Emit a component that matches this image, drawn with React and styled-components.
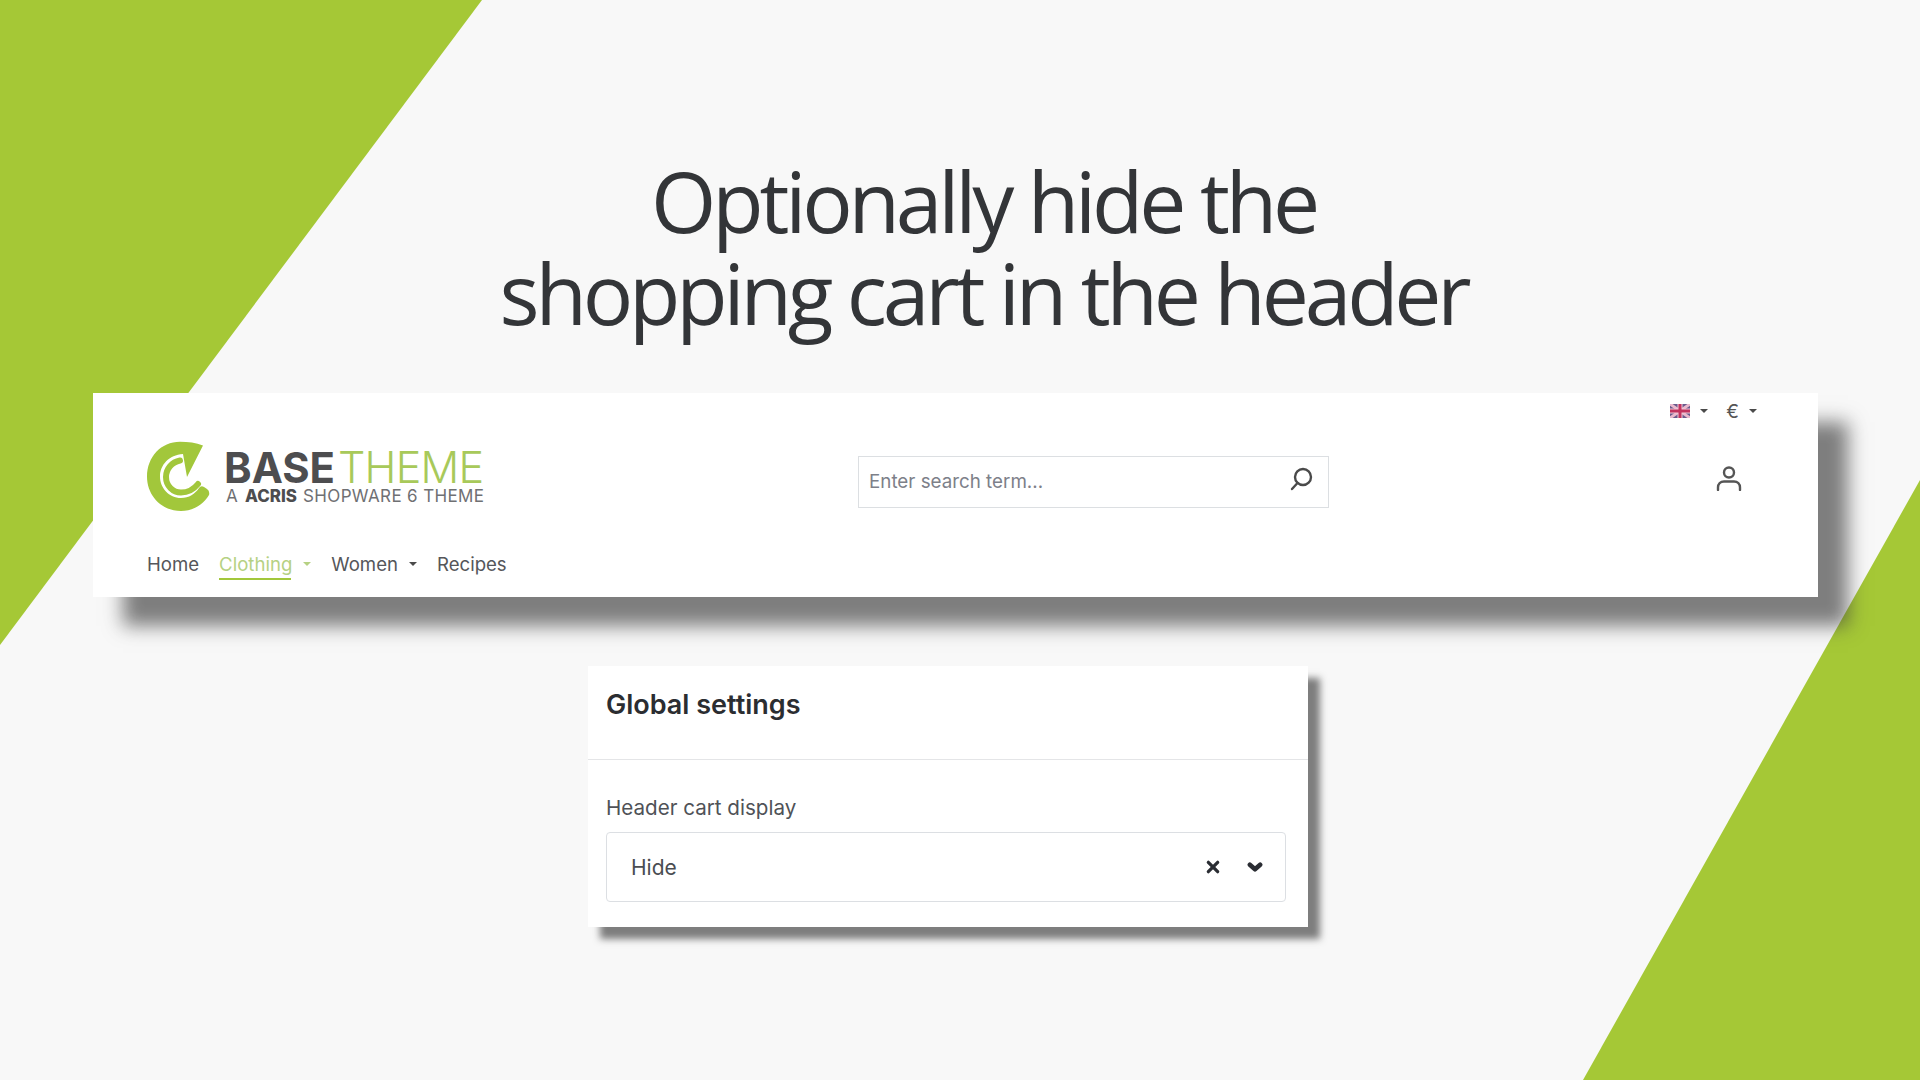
import React from 'react'
import styled, { createGlobalStyle } from 'styled-components'

const GlobalStyle = createGlobalStyle`
    html, body {
        margin: 0;
        padding: 0;
    }
    body {
        background: #f8f8f8;
        font-family: "Inter", "Liberation Sans", sans-serif;
    }
`;

export default function App() {
    return (
        <Slide>
            <GlobalStyle />
            <Wedges viewBox="0 0 1920 1080" aria-hidden="true">
                <polygon points="0,0 482,0 0,645" fill="#a5c836" />
                <polygon points="1920,480 1583,1080 1920,1080" fill="#a5c836" />
            </Wedges>

            <Title>Optionally hide the<br />shopping cart in the header</Title>

            <HeaderCard>
                <TopBar>
                    <Switcher>
                        <Flag viewBox="0 0 20 14" aria-hidden="true">
                            <rect width="20" height="14" fill="#6a5a8c" />
                            <path d="M0 0L20 14M20 0L0 14" stroke="#eab8cc" strokeWidth="3" />
                            <path d="M10 0V14M0 7H20" stroke="#f0c8d6" strokeWidth="5" />
                            <path d="M10 0V14M0 7H20" stroke="#c2335f" strokeWidth="3" />
                        </Flag>
                        <Caret />
                    </Switcher>
                    <Switcher>
                        <Euro>€</Euro>
                        <Caret />
                    </Switcher>
                </TopBar>

                <MainRow>
                    <Logo viewBox="0 0 340 75" role="img" aria-label="Basetheme">
                        <path d="M56 5.5C49 2.5 41 1.7 33 1.7C14 1.7 0 17 0 36.5C0 56 15 71 34 71C46 71 56 65 62 55Q63 51 60 49L57 47Q54 45 52 48C48 54 42 58 34 58C22 58 13 48 13 36.5C13 25 22 15 36 14L40 37Z" fill="#a2c73b" />
                        <path d="M33 20.5C25 22 19 29 19 37C19 46 26 52.5 34 52.5C42 52.5 47 49 51 44" fill="none" stroke="#a2c73b" strokeWidth="6" strokeLinecap="round" />
                        <LogoBold x="77" y="43" textLength="111" lengthAdjust="spacingAndGlyphs">BASE</LogoBold>
                        <LogoThin x="191" y="43" textLength="146" lengthAdjust="spacing">THEME</LogoThin>
                        <LogoTag x="79" y="62">A</LogoTag>
                        <LogoAcris x="98" y="62" textLength="52" lengthAdjust="spacingAndGlyphs">ACRIS</LogoAcris>
                        <LogoTag x="156" y="62" textLength="181" lengthAdjust="spacing">SHOPWARE 6 THEME</LogoTag>
                    </Logo>

                    <SearchBox>
                        <SearchPlaceholder>Enter search term...</SearchPlaceholder>
                        <SearchIcon viewBox="0 0 24 24" aria-hidden="true">
                            <circle cx="14" cy="10" r="8" />
                            <path d="M8.5 16L3 22" />
                        </SearchIcon>
                    </SearchBox>

                    <UserIcon viewBox="0 0 26 26" aria-hidden="true">
                        <circle cx="13" cy="7.5" r="5" />
                        <path d="M2 25V22.5C2 19 4.5 16.5 8 16.5H18C21.5 16.5 24 19 24 22.5V25" />
                    </UserIcon>
                </MainRow>

                <Nav>
                    <NavItem>Home</NavItem>
                    <NavItem $active $dropdown>Clothing</NavItem>
                    <NavItem $dropdown>Women</NavItem>
                    <NavItem>Recipes</NavItem>
                </Nav>
            </HeaderCard>

            <SettingsCard>
                <SettingsTitle>Global settings</SettingsTitle>
                <SettingsBody>
                    <FieldLabel>Header cart display</FieldLabel>
                    <SelectBox>
                        <span>Hide</span>
                        <SelectIcons>
                            <ClearIcon viewBox="0 0 12 12" aria-hidden="true">
                                <path d="M2 2L10 10M10 2L2 10" />
                            </ClearIcon>
                            <OpenIcon viewBox="0 0 14 10" aria-hidden="true">
                                <path d="M2.5 3L7 7L11.5 3" />
                            </OpenIcon>
                        </SelectIcons>
                    </SelectBox>
                </SettingsBody>
            </SettingsCard>
        </Slide>
    )
}


const Slide = styled.div`
    position: relative;
    width: 1920px;
    height: 1080px;
    overflow: hidden;
    background: #f8f8f8;
    display: flex;
    flex-direction: column;
    align-items: flex-start;
`;

const Wedges = styled.svg`
    position: absolute;
    inset: 0;
    width: 1920px;
    height: 1080px;
`;

const Title = styled.h1`
    position: relative;
    align-self: stretch;
    margin: 155px 0 0 47px;
    text-align: center;
    font-family: "Open Sans", sans-serif;
    font-weight: 400;
    font-size: 84px;
    line-height: 92px;
    letter-spacing: -4.2px;
    color: #333538;
`;

const HeaderCard = styled.div`
    position: relative;
    box-sizing: border-box;
    width: 1725px;
    height: 204px;
    margin: 54px 0 0 93px;
    padding: 0 54px;
    background: #fff;
    box-shadow: 30px 29px 18px rgba(60, 60, 60, 0.65);
`;

const TopBar = styled.div`
    display: flex;
    justify-content: flex-end;
    align-items: center;
    gap: 18px;
    height: 36px;
    padding-right: 7px;
`;

const Switcher = styled.div`
    display: flex;
    align-items: center;
    gap: 10px;
`;

const Flag = styled.svg`
    width: 20px;
    height: 14px;
    display: block;
`;

const Euro = styled.span`
    font-size: 19px;
    color: #555;
`;

const Caret = styled.i`
    width: 0;
    height: 0;
    border-left: 4.5px solid transparent;
    border-right: 4.5px solid transparent;
    border-top: 4.5px solid #4a4a4a;
`;

const MainRow = styled.div`
    display: flex;
    align-items: center;
    height: 105px;
`;

const Logo = styled.svg`
    width: 340px;
    height: 75px;
    flex: none;
    margin: -9px 371px 0 0;
    font-family: "Inter", sans-serif;
`;

const LogoBold = styled.text`
    font-size: 43px;
    font-weight: 700;
    fill: #4d4d4f;
`;

const LogoThin = styled.text`
    font-size: 43px;
    font-weight: 300;
    fill: #a8c95a;
`;

const LogoTag = styled.text`
    font-size: 17px;
    font-weight: 400;
    fill: #6f7073;
`;

const LogoAcris = styled.text`
    font-size: 17px;
    font-weight: 800;
    fill: #4d4d4f;
`;

const SearchBox = styled.div`
    box-sizing: border-box;
    width: 471px;
    height: 52px;
    display: flex;
    align-items: center;
    justify-content: space-between;
    padding: 0 15px 0 10px;
    border: 1px solid #dcdfe2;
`;

const SearchPlaceholder = styled.span`
    font-size: 18.8px;
    color: #7d8089;
`;

const SearchIcon = styled.svg`
    width: 24px;
    height: 24px;
    margin-top: -5px;
    fill: none;
    stroke: #4a4a4a;
    stroke-width: 2.4;
    stroke-linecap: round;
`;

const UserIcon = styled.svg`
    width: 26px;
    height: 26px;
    margin: -7px 0 0 387px;
    fill: none;
    stroke: #555;
    stroke-width: 2.4;
    stroke-linecap: round;
`;

const Nav = styled.nav`
    display: flex;
    gap: 20px;
    margin-top: 18px;
`;

const NavItem = styled.div`
    position: relative;
    display: flex;
    align-items: center;
    gap: 11px;
    font-size: 18.6px;
    line-height: 24px;
    color: ${p => (p.$active ? '#b6d183' : '#55565a')};
    &::after {
        content: "";
        display: ${p => (p.$dropdown ? 'block' : 'none')};
        border-left: 4.5px solid transparent;
        border-right: 4.5px solid transparent;
        border-top: 4.5px solid ${p => (p.$active ? '#b6d183' : '#4a4a4a')};
    }
    &::before {
        content: "";
        display: ${p => (p.$active ? 'block' : 'none')};
        position: absolute;
        left: 0;
        right: 20px;
        bottom: -4px;
        height: 2px;
        background: #a2c73b;
    }
`;

const SettingsCard = styled.div`
    position: relative;
    box-sizing: border-box;
    width: 720px;
    height: 261px;
    margin: 69px 0 0 588px;
    background: #fff;
    box-shadow: 12px 12px 7px rgba(60, 60, 60, 0.65);
`;

const SettingsTitle = styled.div`
    box-sizing: border-box;
    height: 94px;
    padding: 24px 18px 0;
    font-size: 27px;
    line-height: 30px;
    font-weight: 600;
    color: #2b2d31;
    border-bottom: 1px solid #e4e5e7;
`;

const SettingsBody = styled.div`
    padding: 36px 22px 0 18px;
`;

const FieldLabel = styled.div`
    font-size: 20.6px;
    line-height: 24px;
    color: #4f5257;
    margin-bottom: 12px;
`;

const SelectBox = styled.div`
    box-sizing: border-box;
    height: 70px;
    display: flex;
    align-items: center;
    justify-content: space-between;
    padding: 0 22px 0 24px;
    border: 1px solid #dcdfe3;
    border-radius: 4px;
    font-size: 21px;
    color: #4a4d52;
`;

const SelectIcons = styled.div`
    display: flex;
    align-items: center;
    gap: 27px;
`;

const ClearIcon = styled.svg`
    width: 14px;
    height: 14px;
    fill: none;
    stroke: #2a2d33;
    stroke-width: 2.8;
    stroke-linecap: round;
`;

const OpenIcon = styled.svg`
    width: 16px;
    height: 12px;
    fill: none;
    stroke: #2a2d33;
    stroke-width: 4;
    stroke-linecap: round;
    stroke-linejoin: round;
`;
